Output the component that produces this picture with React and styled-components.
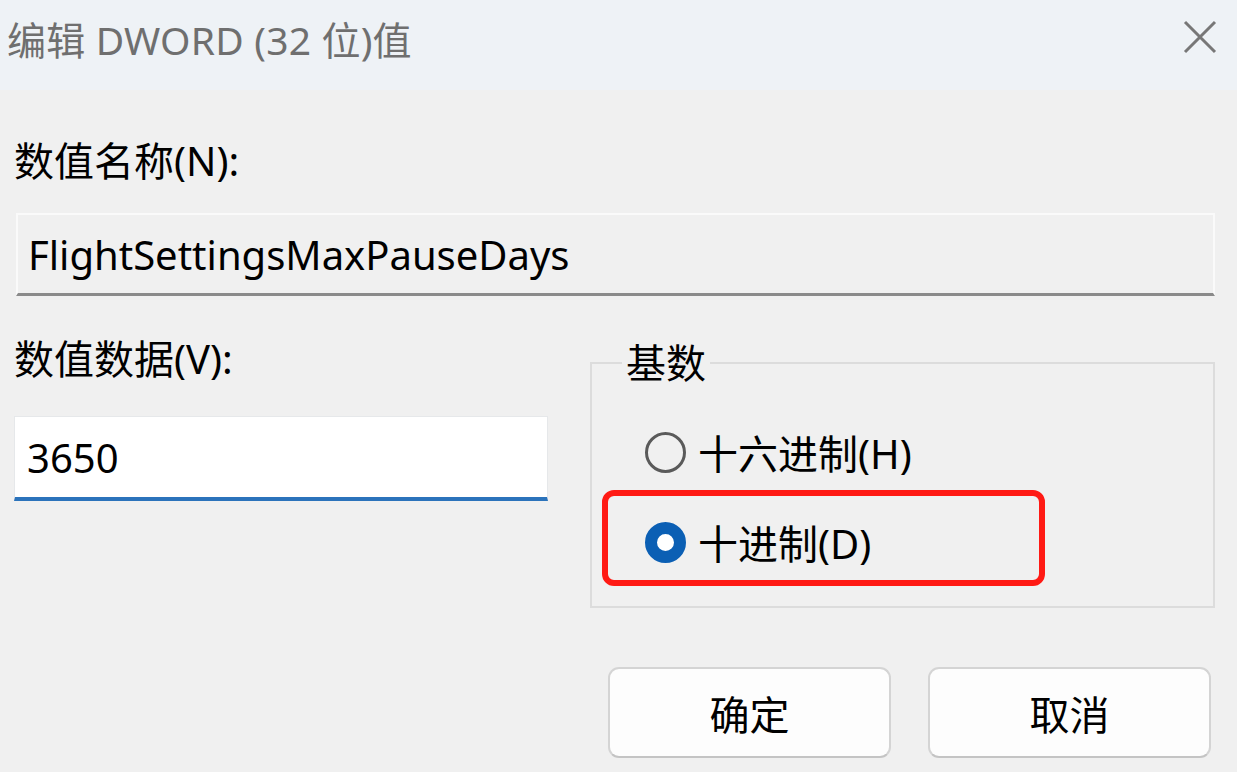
import styled, { createGlobalStyle } from 'styled-components';

const GlobalStyle = createGlobalStyle`
  html, body {
    margin: 0;
    padding: 0;
    background: #f0f0f0;
  }
  body {
    font-family: "Noto Sans", "Noto Sans CJK SC", sans-serif;
  }
`;

const Window = styled.div`
  width: 1237px;
  height: 772px;
  background-color: #f0f0f0;
  display: flex;
  flex-direction: column;
  overflow: hidden;
  color: #000;
`;

const TitleBar = styled.div`
  height: 90px;
  flex-shrink: 0;
  background-color: #eef2f6;
  display: flex;
  align-items: center;
  justify-content: space-between;
  padding: 0 20px 0 7px;
`;

const Title = styled.div`
  font-size: 39px;
  line-height: 46px;
  letter-spacing: 0.2px;
  color: #6f6f6f;
  margin-top: -10px;
`;

const CloseButton = styled.button`
  background: transparent;
  border: none;
  padding: 0;
  width: 34px;
  height: 34px;
  margin-top: -16px;
  cursor: pointer;
  display: flex;
`;

const Body = styled.div`
  display: flex;
  flex-direction: column;
  padding: 0 22px 0 14px;
`;

const FieldLabel = styled.div`
  font-size: 40px;
  line-height: 48px;
  margin-top: ${(p) => p.top}px;
`;

const NameInput = styled.div`
  margin-top: 28px;
  margin-left: 2px;
  height: 78px;
  background-color: #f0f0f0;
  border: 2px solid #fafafa;
  border-bottom: 3px solid #8a8a8a;
  display: flex;
  align-items: center;
  padding-left: 10px;
  font-size: 40px;
`;

const DataRow = styled.div`
  display: flex;
  justify-content: space-between;
  align-items: flex-start;
  margin-top: 39px;
`;

const LeftColumn = styled.div`
  width: 534px;
  display: flex;
  flex-direction: column;
`;

const ValueInput = styled.div`
  margin-top: 33px;
  height: 80px;
  background-color: #fff;
  border: 1px solid #e6e8ea;
  border-bottom: 4px solid #2b73bb;
  display: flex;
  align-items: center;
  padding-left: 12px;
  font-size: 40px;
`;

const GroupBox = styled.fieldset`
  width: 625px;
  margin: 0;
  padding: 0 0 20px 10px;
  border: 2px solid #dcdcdc;
  box-sizing: border-box;
`;

const Legend = styled.legend`
  font-size: 40px;
  line-height: 56px;
  padding: 0 4px;
  margin-left: 20px;
`;

const RadioRow = styled.div`
  display: flex;
  align-items: center;
  gap: 12px;
  font-size: 40px;
  padding-left: 43px;
  height: 64px;
  margin-top: ${(p) => p.top || 0}px;
`;

const Highlight = styled.div`
  width: 443px;
  height: 96px;
  box-sizing: border-box;
  margin-top: ${(p) => p.top}px;
  border: 6px solid #ff1a14;
  border-radius: 12px;
  display: flex;
  align-items: center;
  padding: 8px 0 0 37px;
  gap: 12px;
  font-size: 40px;
`;

const RadioCircle = styled.span`
  width: 41px;
  height: 41px;
  box-sizing: border-box;
  border-radius: 50%;
  flex-shrink: 0;
  border: ${(p) => (p.checked ? '12px solid #0b5fb4' : '3px solid #5a5a5a')};
  background-color: ${(p) => (p.checked ? '#fff' : 'transparent')};
`;

const ButtonRow = styled.div`
  display: flex;
  justify-content: flex-end;
  gap: 37px;
  margin-top: 59px;
  padding-right: 4px;
`;

const DialogButton = styled.button`
  width: 283px;
  height: 91px;
  border: 2px solid #d4d4d4;
  border-bottom-color: #c4c4c4;
  border-radius: 11px;
  background-color: #fdfdfd;
  font-family: "Noto Sans", "Noto Sans CJK SC", sans-serif;
  font-size: 40px;
  color: #000;
  cursor: pointer;
`;

const App = () => {
  return (
    <>
      <GlobalStyle />
      <Window>
        <TitleBar>
          <Title>编辑 DWORD (32 位)值</Title>
          <CloseButton aria-label="关闭">
            <svg width="34" height="34" viewBox="0 0 34 34">
              <path d="M2 2 L32 32 M32 2 L2 32" stroke="#777" strokeWidth="3" fill="none" />
            </svg>
          </CloseButton>
        </TitleBar>
        <Body>
          <FieldLabel top={47}>数值名称(N):</FieldLabel>
          <NameInput>FlightSettingsMaxPauseDays</NameInput>
          <DataRow>
            <LeftColumn>
              <FieldLabel top={0}>数值数据(V):</FieldLabel>
              <ValueInput>3650</ValueInput>
            </LeftColumn>
            <GroupBox>
              <Legend>基数</Legend>
              <RadioRow top={29}>
                <RadioCircle />
                十六进制(H)
              </RadioRow>
              <Highlight top={6}>
                <RadioCircle checked />
                十进制(D)
              </Highlight>
            </GroupBox>
          </DataRow>
          <ButtonRow>
            <DialogButton>确定</DialogButton>
            <DialogButton>取消</DialogButton>
          </ButtonRow>
        </Body>
      </Window>
    </>
  );
};

export default App;
